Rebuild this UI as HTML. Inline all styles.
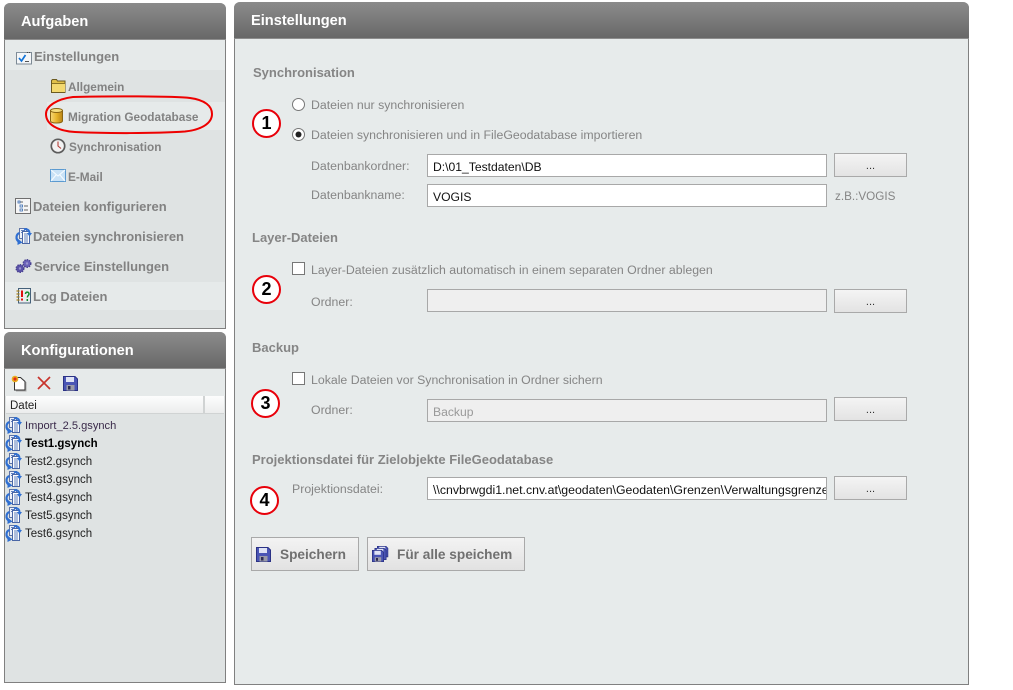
<!DOCTYPE html>
<html lang="de">
<head>
<meta charset="utf-8">
<title>Einstellungen</title>
<style>
html,body{margin:0;padding:0;background:#fff;width:1013px;height:690px;overflow:hidden}
body{font-family:"Liberation Sans",Arial,sans-serif;position:relative}
.a{position:absolute;white-space:nowrap}
.panel{position:absolute;box-sizing:border-box;border:1px solid #808080;border-top:0;background:#dfe3e3;border-radius:6px 6px 0 0}
.head{position:absolute;left:-1px;right:-1px;top:0;height:37px;padding:11px 0 0 17px;line-height:16px;background:linear-gradient(#8b8b8b,#686868);border-bottom:1px solid #8d8d8d;border-radius:6px 6px 0 0;color:#fff;font-weight:bold;font-size:14.6px;box-sizing:border-box}
.nav{position:absolute;font-weight:bold;color:#828282;font-size:13px;white-space:nowrap;line-height:16px}
.sub{position:absolute;font-weight:bold;color:#828282;font-size:11.8px;white-space:nowrap;line-height:16px}
.band{position:absolute;left:0;right:0;background:#e6eaea}
.h{position:absolute;font-weight:bold;color:#858585;font-size:13px;white-space:nowrap;line-height:16px}
.l{position:absolute;color:#858585;font-size:12.32px;white-space:nowrap;line-height:16px}
.in{position:absolute;box-sizing:border-box;left:427px;width:400px;height:23px;border:1px solid #a8a8a8;background:#fff;color:#111;font-size:12.15px;line-height:24px;padding-left:5px;white-space:nowrap;overflow:hidden}
.in.d{background:#efefef;color:#999}
.dots{position:absolute;box-sizing:border-box;left:834px;width:73px;height:24px;border:1px solid #a9a9a9;background:linear-gradient(#f4f4f4,#e3e3e3);color:#333;font-size:11px;line-height:24px;text-align:center}
.cb{position:absolute;left:292px;width:13px;height:13px;box-sizing:border-box;border:1px solid #777;background:#fff}
.num{position:absolute;box-sizing:border-box;width:29px;height:29px;border:2px solid #e8000a;border-radius:50%;background:#fff;color:#000;font-size:18px;font-weight:bold;text-align:center;line-height:25px}
.big{position:absolute;box-sizing:border-box;height:34px;border:1px solid #a9a9a9;background:linear-gradient(#f3f3f3,#e2e2e2);color:#707070;font-weight:bold;font-size:13.65px;line-height:34px;white-space:nowrap}
.f{position:absolute;left:25px;font-size:11.5px;color:#222;line-height:14px;white-space:nowrap}
svg{position:absolute;overflow:visible}
</style>
</head>
<body>
<svg width="0" height="0" style="position:absolute"><defs>
<linearGradient id="cyl" x1="0" x2="1" y1="0" y2="0"><stop offset="0" stop-color="#f7d878"/><stop offset=".5" stop-color="#e8b52c"/><stop offset="1" stop-color="#b98414"/></linearGradient>
<g id="sync">
<rect x="4.500" y=".5" width="7" height="10" fill="#eef2fb" stroke="#5f74a6"/>
<rect x="7.500" y="3.500" width="7" height="12" fill="#fdfdfd" stroke="#4a66a5"/>
<path d="M6 2.500h4M6 4.500h1M9 6h4M9 8h4M9 10h4M9 12h4M9 14h4" stroke="#5f7fbd"/>
<path d="M4.500 5C1 6 .5 11 3.500 13.500" fill="none" stroke="#2f6fd2" stroke-width="2.200"/>
<path d="M2.500 10.500l5 4-5 2.500z" fill="#2f6fd2"/>
<path d="M9 1.500C12 .5 14.500 2 14.500 5.500" fill="none" stroke="#2f6fd2" stroke-width="2"/>
<path d="M12 5h5l-2.500 3.500z" fill="#2f6fd2"/>
</g>
<g id="disk">
<path d="M.5.500h11.500l2.500 2.500v11.500H.5z" fill="#4a55b5" stroke="#2b3285"/>
<rect x="3" y="1" width="8" height="5" fill="#dfe3f5"/>
<rect x="3.500" y="9" width="8" height="5.500" fill="#9a9aa8"/>
<rect x="5" y="10" width="2.500" height="3.500" fill="#2b2b55"/>
</g>
</defs></svg>

<!-- Aufgaben panel -->
<div class="panel" style="left:4px;top:3px;width:222px;height:326px">
  <div class="head">Aufgaben</div>
  <div class="band" style="top:37px;height:30px"></div>
  <div class="band" style="top:99px;height:28px;left:42px"></div>
  <div class="band" style="top:279px;height:28px"></div>
</div>
<svg style="left:16px;top:50px" width="16" height="15"><rect x=".5" y="2.500" width="15" height="11.500" fill="#f4f6f8" stroke="#7d8a95"/><path d="M.5 2.500h9" stroke="#8796a3"/><path d="M11 2.500h4" stroke="#444" stroke-dasharray="1 1"/><path d="M3 8l2.500 3 4-6" fill="none" stroke="#1273d6" stroke-width="1.700"/><path d="M9 11.500h4" stroke="#555"/></svg>
<div class="nav" style="left:34px;top:49px">Einstellungen</div>
<svg style="left:51px;top:79px" width="15" height="14"><path d="M.5 13.500v-12l1-1h4l1 1.500h7.500v11.500z" fill="#e0c04a" stroke="#6b5a20"/><rect x="1" y="5" width="13" height="8" fill="#f3d970"/><path d="M1 4.500h13" stroke="#8a7425"/></svg>
<div class="sub" style="left:68px;top:79px">Allgemein</div>
<svg style="left:50px;top:108px" width="13" height="16"><path d="M.5 2.500v10.500c0 1.200 2.700 2 6 2s6-.8 6-2V2.500z" fill="url(#cyl)" stroke="#8a6512"/><ellipse cx="6.500" cy="2.500" rx="6" ry="2" fill="#f6dd7d" stroke="#8a6512"/></svg>
<div class="sub" style="left:68px;top:109px">Migration Geodatabase</div>
<svg style="left:50px;top:138px" width="16" height="16"><circle cx="8" cy="8" r="6.700" fill="#f2f2f2" stroke="#5c5c5c" stroke-width="1.700"/><path d="M8 3.500V8l3 2.500" fill="none" stroke="#b5403a" stroke-width="1.100"/></svg>
<div class="sub" style="left:69px;top:139px">Synchronisation</div>
<svg style="left:50px;top:169px" width="16" height="13"><rect x=".5" y=".5" width="15" height="12" fill="#c9e2f6" stroke="#5b9ad0"/><path d="M1 1l7 6 7-6M1 12l5-6M15 12l-5-6" fill="none" stroke="#f5fbff" stroke-width="1.100"/></svg>
<div class="sub" style="left:68px;top:169px">E-Mail</div>
<svg style="left:15px;top:198px" width="16" height="16"><rect x=".5" y=".5" width="15" height="15" fill="#f6f6f6" stroke="#6f6f6f"/><path d="M5 4h3M9 8h4M9 12h4" stroke="#666"/><rect x="3" y="3" width="2" height="2" fill="#fff" stroke="#3a6cb0" stroke-width=".8"/><rect x="5" y="7" width="2.500" height="2" fill="#fff" stroke="#3a6cb0" stroke-width=".8"/><rect x="5" y="11" width="2.500" height="2" fill="#fff" stroke="#3a6cb0" stroke-width=".8"/></svg>
<div class="nav" style="left:33px;top:199px">Dateien konfigurieren</div>
<svg style="left:15px;top:228px" width="17" height="17"><use href="#sync"/></svg>
<div class="nav" style="left:33px;top:229px">Dateien synchronisieren</div>
<svg style="left:15px;top:259px" width="17" height="14"><circle cx="5" cy="9.500" r="3.800" fill="#5a52a8" stroke="#47408f" stroke-width="1.400" stroke-dasharray="1.500 1"/><circle cx="12" cy="4.500" r="3.800" fill="#6a62b8" stroke="#47408f" stroke-width="1.400" stroke-dasharray="1.500 1"/><circle cx="5" cy="9.500" r="1.200" fill="#9b96cf"/><circle cx="12" cy="4.500" r="1.200" fill="#9b96cf"/></svg>
<div class="nav" style="left:34px;top:259px">Service Einstellungen</div>
<svg style="left:16px;top:288px" width="15" height="16"><rect x="2.500" y=".5" width="12" height="14.500" fill="#e9ecef" stroke="#45617a"/><path d="M.5 3h3M.5 6h3M.5 9h3M.5 12h3" stroke="#a8801e" stroke-width="1.200"/><path d="M6 2.500V9" stroke="#e01010" stroke-width="2"/><rect x="5" y="10.500" width="2" height="2" fill="#e01010"/><path d="M9.500 6c0-2.500 3.500-2.500 3.500 0 0 1.500-1.700 1.500-1.700 3.500M11.300 11v2" fill="none" stroke="#168a2c" stroke-width="1.500"/></svg>
<div class="nav" style="left:33px;top:289px">Log Dateien</div>

<!-- red ellipse -->
<svg style="left:45px;top:96px" width="169" height="38"><path d="M28 1C60 0 130 0 145 2 160 4 167 10 167 18 167 28 155 34 140 35.500 110 37.500 60 37.500 30 36 12 35 1 28 1 18 1 10 12 3 28 1z" fill="none" stroke="#ee0000" stroke-width="2"/></svg>

<!-- Konfigurationen panel -->
<div class="panel" style="left:4px;top:332px;width:222px;height:351px">
  <div class="head">Konfigurationen</div>
  <div class="band" style="top:37px;height:27px"></div>
  <div class="a" style="left:1px;top:64px;right:1px;height:18px;box-sizing:border-box;background:linear-gradient(#fdfdfd,#eceded);border-bottom:1px solid #d0d3d3"></div>
  <div class="a" style="left:198px;top:64px;width:2px;height:18px;background:#d0d3d3"></div>
</div>
<svg style="left:11px;top:375px" width="15" height="16"><path d="M3.500 2.500h6l4.500 4v8.500H3.500z" fill="#fff" stroke="#333"/><path d="M15 7v9H5" fill="none" stroke="#aaa"/><circle cx="4" cy="4" r="3.300" fill="#e8b020"/><circle cx="4" cy="4" r="1.600" fill="#e52a1a"/></svg>
<svg style="left:37px;top:376px" width="14" height="14"><path d="M1 1l12 12M13 1L1 13" stroke="#c8342c" stroke-width="1.700"/></svg>
<svg style="left:63px;top:376px" width="15" height="15"><use href="#disk"/></svg>
<div class="a" style="left:10px;top:399px;font-size:11.500px;color:#222;line-height:14px">Datei</div>
<svg style="left:5px;top:417px" width="17" height="17"><use href="#sync"/></svg>
<svg style="left:5px;top:435px" width="17" height="17"><use href="#sync"/></svg>
<svg style="left:5px;top:453px" width="17" height="17"><use href="#sync"/></svg>
<svg style="left:5px;top:471px" width="17" height="17"><use href="#sync"/></svg>
<svg style="left:5px;top:489px" width="17" height="17"><use href="#sync"/></svg>
<svg style="left:5px;top:507px" width="17" height="17"><use href="#sync"/></svg>
<svg style="left:5px;top:525px" width="17" height="17"><use href="#sync"/></svg>
<div class="f" style="top:419px;color:#3a2a4a;font-size:11.1px">Import_2.5.gsynch</div>
<div class="f" style="top:437px;font-weight:bold;color:#000">Test1.gsynch</div>
<div class="f" style="top:455px">Test2.gsynch</div>
<div class="f" style="top:473px">Test3.gsynch</div>
<div class="f" style="top:491px">Test4.gsynch</div>
<div class="f" style="top:509px">Test5.gsynch</div>
<div class="f" style="top:527px">Test6.gsynch</div>

<!-- Einstellungen panel -->
<div class="panel" style="left:234px;top:2px;width:735px;height:683px;background:#e7ebeb">
  <div class="head">Einstellungen</div>
</div>

<div class="h" style="left:253px;top:65px">Synchronisation</div>
<svg style="left:292px;top:98px" width="13" height="13"><circle cx="6.500" cy="6.500" r="6" fill="#fff" stroke="#777"/></svg>
<div class="l" style="left:311px;top:97px">Dateien nur synchronisieren</div>
<svg style="left:292px;top:128px" width="13" height="13"><circle cx="6.500" cy="6.500" r="6" fill="#fff" stroke="#777"/><circle cx="6.500" cy="6.500" r="3" fill="#222"/></svg>
<div class="l" style="left:311px;top:127px">Dateien synchronisieren und in FileGeodatabase importieren</div>
<div class="l" style="left:311px;top:158px">Datenbankordner:</div>
<div class="in" style="top:154px">D:\01_Testdaten\DB</div>
<div class="dots" style="top:153px">...</div>
<div class="l" style="left:311px;top:187px">Datenbankname:</div>
<div class="in" style="top:184px">VOGIS</div>
<div class="l" style="left:835px;top:189px;font-size:11.7px">z.B.:VOGIS</div>

<div class="h" style="left:252px;top:230px">Layer-Dateien</div>
<div class="cb" style="top:262px"></div>
<div class="l" style="left:311px;top:262px">Layer-Dateien zusätzlich automatisch in einem separaten Ordner ablegen</div>
<div class="l" style="left:311px;top:294px">Ordner:</div>
<div class="in d" style="top:289px"></div>
<div class="dots" style="top:289px">...</div>

<div class="h" style="left:252px;top:340px">Backup</div>
<div class="cb" style="top:372px"></div>
<div class="l" style="left:311px;top:372px">Lokale Dateien vor Synchronisation in Ordner sichern</div>
<div class="l" style="left:311px;top:402px">Ordner:</div>
<div class="in d" style="top:399px">Backup</div>
<div class="dots" style="top:397px">...</div>

<div class="h" style="left:252px;top:452px">Projektionsdatei für Zielobjekte FileGeodatabase</div>
<div class="l" style="left:292px;top:481px">Projektionsdatei:</div>
<div class="in" style="top:477px;font-size:12.3px">\\cnvbrwgdi1.net.cnv.at\geodaten\Geodaten\Grenzen\Verwaltungsgrenzen</div>
<div class="dots" style="top:476px">...</div>

<div class="num" style="left:252px;top:109px">1</div>
<div class="num" style="left:252px;top:275px">2</div>
<div class="num" style="left:251px;top:389px">3</div>
<div class="num" style="left:250px;top:486px">4</div>

<div class="big" style="left:251px;top:537px;width:108px;padding-left:28px">Speichern</div>
<svg style="left:256px;top:547px" width="15" height="15"><use href="#disk"/></svg>
<div class="big" style="left:367px;top:537px;width:158px;padding-left:29px">Für alle speichem</div>
<svg style="left:372px;top:546px" width="16" height="16"><g transform="translate(5,0) scale(.75)"><use href="#disk"/></g><g transform="translate(2.500,2) scale(.8)"><use href="#disk"/></g><g transform="translate(0,4) scale(.8)"><use href="#disk"/></g></svg>
</body>
</html>
